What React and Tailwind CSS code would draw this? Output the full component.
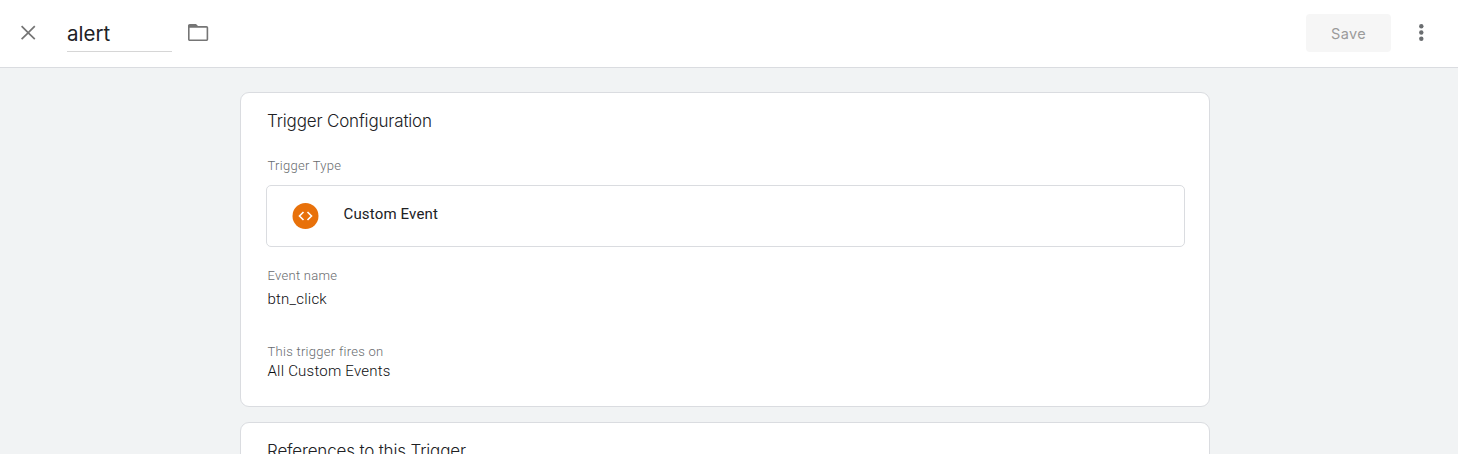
import React from "react";

function Header() {
  return (
    <header className="flex h-[68px] shrink-0 items-start border-b border-[#dadce0] bg-white pl-4 pr-[25px]">
      <button className="mt-[20.5px] h-6 w-6" aria-label="Close">
        <svg viewBox="0 0 24 24" className="h-6 w-6" fill="#757575">
          <path d="M19.400 5.800 18.200 4.600 12.200 10.500 6.200 4.600 5 5.800 11 11.700 5 17.600 6.200 18.800 12.200 12.900 18.200 18.800 19.400 17.600 13.400 11.700z" />
        </svg>
      </button>
      <div className="ml-[27px] mt-[14px] h-[38px] w-[105px] border-b border-[#d6d6d6] font-['Inter','Roboto',sans-serif] text-[20.5px] font-normal leading-[40px] tracking-[0px] text-[#202124]">
        alert
      </div>
      <button className="ml-[14px] mt-5 h-6 w-6" aria-label="Folder">
        <svg viewBox="0 0 24 24" className="h-6 w-6" fill="#757575">
          <path fillRule="evenodd" d="M20.400 6H12l-2-2H3.800C2.700 4 2 4.800 2 5.800v13.400c0 1 .7 1.800 1.800 1.800h16.600c1 0 1.800-.8 1.800-1.800V7.800c0-1-.8-1.800-1.800-1.800zm.2 13.400H3.600V7.800h17z" />
        </svg>
      </button>
      <button className="ml-auto mt-[14px] h-[38px] w-[85px] rounded-[4px] bg-[#f6f6f6] font-['Inter','Roboto',sans-serif] text-[14.5px] leading-[40px] tracking-[0.4px] text-[#9b9b9b]">
        Save
      </button>
      <button className="ml-[18px] mt-[21px] h-6 w-6" aria-label="More">
        <svg viewBox="0 0 24 24" className="h-6 w-6" fill="#6a6d70">
          <circle cx="12.300" cy="5.300" r="2.200" />
          <circle cx="12.300" cy="11.500" r="2.200" />
          <circle cx="12.300" cy="17.800" r="2.200" />
        </svg>
      </button>
    </header>
  );
}

function Title({ children }) {
  return (
    <h2 className="pl-px font-['Inter','Roboto',sans-serif] text-[17px] font-light leading-6 tracking-[-0.17px] text-[#202124]">
      {children}
    </h2>
  );
}

function Label({ children }) {
  return (
    <div className="pl-[1.5px] text-[13px] font-[350] leading-4 tracking-[0.28px] text-[#686b6e]">
      {children}
    </div>
  );
}

function Value({ children }) {
  return (
    <div className="pl-[1.5px] text-[15px] font-[350] leading-5 tracking-[0.22px] text-[#0c0d10]">
      {children}
    </div>
  );
}

export default function App() {
  return (
    <div className="flex h-[454px] flex-col overflow-hidden bg-[#f1f3f4] font-['Roboto',sans-serif]">
      <Header />
      <main className="ml-[240px] mt-6 flex w-[970px] flex-col gap-[15px]">
        <section className="h-[315px] shrink-0 rounded-[9px] border border-[#dadce0] bg-white px-[25px] pt-4">
          <Title>Trigger Configuration</Title>
          <div className="mt-[25px]">
            <Label>Trigger Type</Label>
          </div>
          <div className="mt-[11px] flex h-[62px] w-[919px] items-center rounded-[5px] border border-[#dadce0] pl-[25px]">
            <svg viewBox="0 0 26 26" className="h-[26px] w-[27px]" fill="none">
              <circle cx="13" cy="13" r="13" fill="#e8710a" />
              <path d="M11 9 7 13l4 4M15 9l4 4-4 4" stroke="#fff" strokeWidth="1.600" />
            </svg>
            <span className="mb-1 ml-[24.5px] text-[15px] font-[450] leading-5 tracking-[0.16px] text-[#202124]">
              Custom Event
            </span>
          </div>
          <div className="mt-[21px]">
            <Label>Event name</Label>
            <div className="mt-[5px]">
              <Value>btn_click</Value>
            </div>
          </div>
          <div className="mt-[35px]">
            <Label>This trigger fires on</Label>
            <div className="mt-px">
              <Value>All Custom Events</Value>
            </div>
          </div>
        </section>
        <section className="h-[120px] shrink-0 rounded-[9px] border border-[#dadce0] bg-white px-[25px] pt-4">
          <Title>References to this Trigger</Title>
        </section>
      </main>
    </div>
  );
}
